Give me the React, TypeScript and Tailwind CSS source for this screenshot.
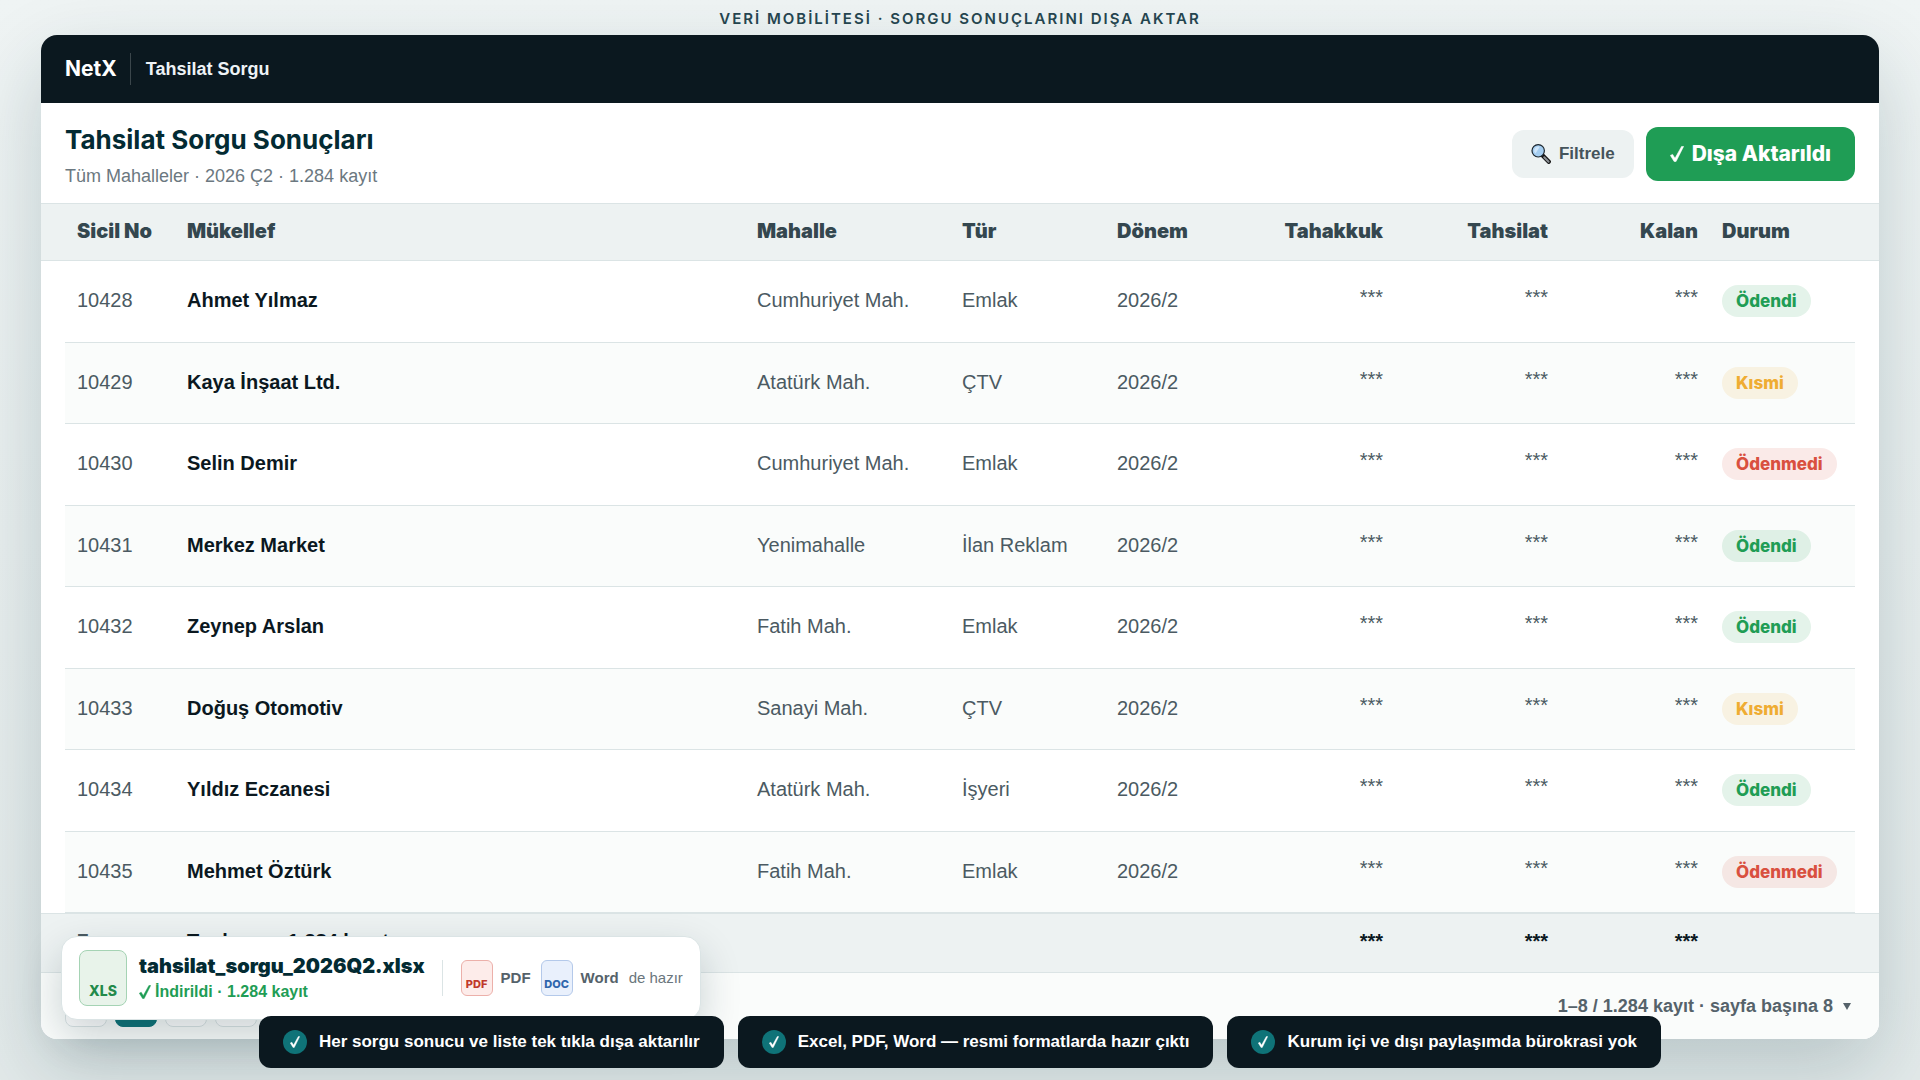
import clsx from 'clsx';

type Status = 'paid' | 'partial' | 'unpaid';

interface Row {
  id: string;
  payer: string;
  district: string;
  kind: string;
  period: string;
  status: Status;
}

const rows: Row[] = [
  { id: '10428', payer: 'Ahmet Yılmaz', district: 'Cumhuriyet Mah.', kind: 'Emlak', period: '2026/2', status: 'paid' },
  { id: '10429', payer: 'Kaya İnşaat Ltd.', district: 'Atatürk Mah.', kind: 'ÇTV', period: '2026/2', status: 'partial' },
  { id: '10430', payer: 'Selin Demir', district: 'Cumhuriyet Mah.', kind: 'Emlak', period: '2026/2', status: 'unpaid' },
  { id: '10431', payer: 'Merkez Market', district: 'Yenimahalle', kind: 'İlan Reklam', period: '2026/2', status: 'paid' },
  { id: '10432', payer: 'Zeynep Arslan', district: 'Fatih Mah.', kind: 'Emlak', period: '2026/2', status: 'paid' },
  { id: '10433', payer: 'Doğuş Otomotiv', district: 'Sanayi Mah.', kind: 'ÇTV', period: '2026/2', status: 'partial' },
  { id: '10434', payer: 'Yıldız Eczanesi', district: 'Atatürk Mah.', kind: 'İşyeri', period: '2026/2', status: 'paid' },
  { id: '10435', payer: 'Mehmet Öztürk', district: 'Fatih Mah.', kind: 'Emlak', period: '2026/2', status: 'unpaid' },
];

const STATUS: Record<Status, { label: string; className: string }> = {
  paid: { label: 'Ödendi', className: 'bg-[#1f9d55]/12 text-[#1f9d55]' },
  partial: { label: 'Kısmi', className: 'bg-[#f0ad2e]/12 text-[#efac32]' },
  unpaid: { label: 'Ödenmedi', className: 'bg-[#d9503f]/12 text-[#d9503f]' },
};

const features = [
  'Her sorgu sonucu ve liste tek tıkla dışa aktarılır',
  'Excel, PDF, Word — resmi formatlarda hazır çıktı',
  'Kurum içi ve dışı paylaşımda bürokrasi yok',
];

const pages = ['‹', '1', '2', '3'];

function Check({ className }: { className?: string }) {
  return (
    <svg viewBox="0 0 14 16" className={className} fill="currentColor" stroke="currentColor" strokeWidth="0.6" aria-hidden="true">
      <path d="M0.4 9.4 L2.6 8.4 L5 12.3 L11.6 0.4 L13.6 0.4 L6 15.6 L4.2 15.6 Z" />
    </svg>
  );
}

function Magnifier() {
  return (
    <svg viewBox="0 0 20 20" className="size-5" aria-hidden="true">
      <path d="M11.4 11.2 L17.8 17.8" stroke="#111" strokeWidth="4.2" strokeLinecap="round" />
      <path d="M13.2 13.2 L17.6 17.7" stroke="#8a8f94" strokeWidth="2" strokeLinecap="round" />
      <circle cx="7.2" cy="6.8" r="6.2" fill="#a4cdf0" stroke="#1c262e" strokeWidth="1.2" />
      <path d="M3.2 7.4 A4.2 4.2 0 0 1 8.8 2.7 L4.6 9.6 Z" fill="#cfe6fa" />
    </svg>
  );
}

function StatusPill({ status }: { status: Status }) {
  return (
    <span
      className={clsx(
        'inline-block rounded-full px-3.5 py-1 font-["Inter"] text-[17px] leading-6 font-extrabold',
        STATUS[status].className,
      )}
    >
      {STATUS[status].label}
    </span>
  );
}

function DownloadToast() {
  return (
    <div className="absolute bottom-[19px] left-5 flex items-center rounded-2xl border border-[#dbe4e5] bg-white py-[13px] pr-[17px] pl-[17px] shadow-[0_16px_40px_rgba(10,40,50,0.2)]">
      <div className="flex h-14 w-12 items-end justify-center rounded-lg border border-[#a5d3b4] bg-[#e8f3ea] pb-1 font-['Inter'] text-[14px] leading-5 font-extrabold text-[#238a4b]">
        XLS
      </div>
      <div className="ml-3">
        <p className="font-['Inter'] text-[20px] leading-7 font-black text-[#032b33]">tahsilat_sorgu_2026Q2.xlsx</p>
        <p className="flex items-center gap-1 text-[16px] leading-6 font-bold text-[#1f9d55]">
          <Check className="h-3.5 w-3" />
          İndirildi · 1.284 kayıt
        </p>
      </div>
      <div className="ml-[17px] flex h-9 items-center border-l border-[#dbe4e5] pl-[18px] text-[15px] font-bold text-[#55626a]">
        <span className="flex h-9 w-8 items-end justify-center rounded-md border border-[#ecb0aa] bg-[#fdecea] pb-[3px] font-['Inter'] text-[11px] leading-4 font-extrabold text-[#c0392b]">
          PDF
        </span>
        <span className="ml-2">PDF</span>
        <span className="ml-2.5 flex h-9 w-8 items-end justify-center rounded-md border border-[#b4c9ea] bg-[#e9f0fc] pb-[3px] font-['Inter'] text-[11px] leading-4 font-extrabold text-[#2f66ad]">
          DOC
        </span>
        <span className="ml-2">Word</span>
        <span className="ml-2.5 font-normal text-[#6a767c]">de hazır</span>
      </div>
    </div>
  );
}

export default function App() {
  return (
    <div className="relative flex min-h-screen flex-col bg-linear-to-b from-[#eff4f4] to-[#e3eaea] px-[41px] pb-[41px] font-['Liberation_Sans',sans-serif]">
      <p className="pt-[5px] pb-0.5 text-center font-['Inter'] text-[15px] leading-7 font-semibold tracking-[2px] text-[#264650]">
        VERİ MOBİLİTESİ · SORGU SONUÇLARINI DIŞA AKTAR
      </p>

      <main className="relative flex grow flex-col">
        <div className="flex grow flex-col overflow-hidden rounded-2xl bg-white shadow-[0_30px_80px_rgba(10,50,60,0.2)]">
          <header className="flex h-[68px] shrink-0 items-center bg-[#0b181f] px-6 text-white">
            <span className="font-['Inter'] text-[21px] leading-7 font-bold">NetX</span>
            <span className="ml-[13px] border-l border-white/20 py-1 pl-[15px] text-[18px] leading-6 font-bold text-[#eef3f6]">Tahsilat Sorgu</span>
          </header>

          <div className="flex h-[100px] shrink-0 items-center justify-between px-6 pt-0.5">
            <div className="pt-0.5">
              <h1 className="font-['Inter'] text-[26px] leading-9 font-bold text-[#032b33]">Tahsilat Sorgu Sonuçları</h1>
              <p className="mt-1.5 text-[18px] leading-6 text-[#6b7880]">Tüm Mahalleler · 2026 Ç2 · 1.284 kayıt</p>
            </div>
            <div className="flex items-center gap-3">
              <button type="button" className="flex h-12 items-center gap-2 rounded-xl bg-[#edf2f2] px-[19px] text-[17px] font-bold text-[#45545b]">
                <Magnifier />
                Filtrele
              </button>
              <button type="button" className="flex h-[54px] items-center gap-2 rounded-xl bg-[#1f9d55] px-6 font-['Inter'] text-[21px] font-extrabold text-white">
                <Check className="h-4 w-3.5" />
                Dışa Aktarıldı
              </button>
            </div>
          </div>

          <table className="w-full grow table-fixed border-separate border-spacing-0 text-left text-[20px] leading-7 text-[#4b5a62]">
            <colgroup>
              <col className="w-6" />
              <col className="w-[110px]" />
              <col />
              <col className="w-[205px]" />
              <col className="w-[155px]" />
              <col className="w-[125px]" />
              <col className="w-[165px]" />
              <col className="w-[165px]" />
              <col className="w-[150px]" />
              <col className="w-[145px]" />
              <col className="w-6" />
            </colgroup>
            <thead>
              <tr className="h-[58px] font-['Inter'] text-[20px] text-[#34474f] *:border-y *:border-[#dbe4e5] *:bg-[#edf2f2] *:pb-0.5 *:font-black">
                <td />
                <th className="px-3">Sicil No</th>
                <th className="px-3">Mükellef</th>
                <th className="px-3">Mahalle</th>
                <th className="px-3">Tür</th>
                <th className="px-3">Dönem</th>
                <th className="px-3 text-right">Tahakkuk</th>
                <th className="px-3 text-right">Tahsilat</th>
                <th className="px-3 text-right">Kalan</th>
                <th className="px-3">Durum</th>
                <td />
              </tr>
            </thead>
            <tbody>
              {rows.map((row, i) => {
                const cell = clsx('border-b border-[#dbe4e5] px-3', i % 2 === 1 && 'bg-[#fafcfb]');
                const text = clsx(cell, 'pb-0.5');
                const amount = clsx(cell, 'pb-2 text-right');
                return (
                  <tr key={row.id}>
                    <td />
                    <td className={text}>{row.id}</td>
                    <td className={clsx(text, 'font-bold text-[#0b181f]')}>{row.payer}</td>
                    <td className={text}>{row.district}</td>
                    <td className={text}>{row.kind}</td>
                    <td className={text}>{row.period}</td>
                    <td className={amount}>***</td>
                    <td className={amount}>***</td>
                    <td className={amount}>***</td>
                    <td className={cell}>
                      <StatusPill status={row.status} />
                    </td>
                    <td />
                  </tr>
                );
              })}
            </tbody>
            <tfoot>
              <tr className="h-[60px] font-bold text-[#0b181f] *:border-y *:border-[#dbe4e5] *:bg-[#edf2f2] *:pb-1">
                <td />
                <td className="px-3 text-[#4b5a62]">Σ</td>
                <td className="px-3">Toplam — 1.284 kayıt</td>
                <td />
                <td />
                <td />
                <td className="px-3 text-right">***</td>
                <td className="px-3 text-right">***</td>
                <td className="px-3 text-right">***</td>
                <td />
                <td />
              </tr>
            </tfoot>
          </table>

          <footer className="flex h-[66px] shrink-0 items-center justify-between bg-[#fafcfb] px-6 text-[18px] font-bold text-[#55626a]">
            <nav className="flex gap-2" aria-label="Sayfalar">
              {pages.map((page) => (
                <button
                  key={page}
                  type="button"
                  className={clsx('size-[42px] rounded-lg border', page === '1' ? 'border-[#0f7378] bg-[#0f7378] text-white' : 'border-[#dbe4e5] bg-white')}
                >
                  {page}
                </button>
              ))}
            </nav>
            <span className="flex items-center gap-2.5">
              1–8 / 1.284 kayıt · sayfa başına 8
              <svg viewBox="0 0 8 7" className="mr-1 h-[7px] w-2" fill="currentColor" aria-hidden="true">
                <path d="M0 0 H8 L4 7 Z" />
              </svg>
            </span>
          </footer>
        </div>

        <DownloadToast />
      </main>

      <ul className="absolute inset-x-0 bottom-3 flex justify-center gap-3.5">
        {features.map((feature) => (
          <li key={feature} className="flex h-[52px] items-center gap-3 rounded-xl bg-[#0b181f] px-6 text-[17px] font-bold whitespace-nowrap text-white">
            <span className="flex size-6 items-center justify-center rounded-full bg-[#0f7378]">
              <Check className="h-3 w-2.5" />
            </span>
            {feature}
          </li>
        ))}
      </ul>
    </div>
  );
}
